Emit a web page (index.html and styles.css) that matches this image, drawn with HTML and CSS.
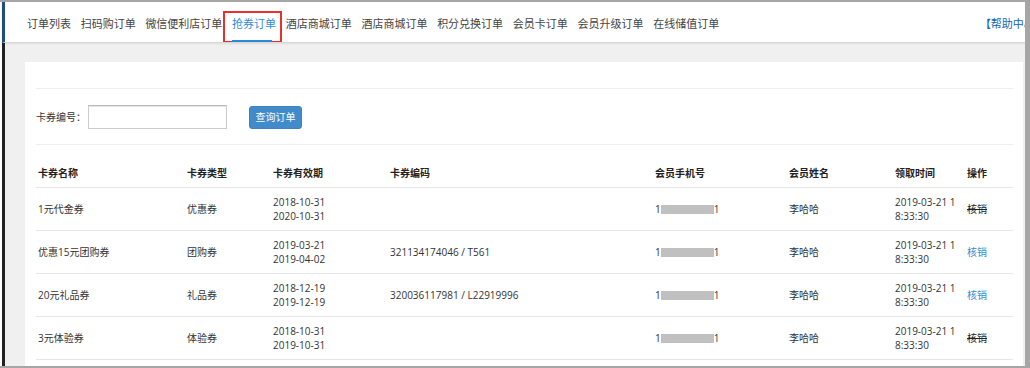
FILE: index.html
```html
<!DOCTYPE html>
<html lang="zh-CN">
<head>
<meta charset="utf-8">
<title>抢券订单</title>
<link rel="stylesheet" href="styles.css">
</head>
<body>
<div class="frame">
  <nav class="nav">
    <a class="nav-item">订单列表</a>
    <a class="nav-item">扫码购订单</a>
    <a class="nav-item">微信便利店订单</a>
    <a class="nav-item active">抢券订单</a>
    <a class="nav-item">酒店商城订单</a>
    <a class="nav-item">酒店商城订单</a>
    <a class="nav-item">积分兑换订单</a>
    <a class="nav-item">会员卡订单</a>
    <a class="nav-item">会员升级订单</a>
    <a class="nav-item">在线储值订单</a>
    <a class="nav-help">【帮助中心】</a>
  </nav>
  <main class="main">
    <section class="card">
      <form class="search">
        <label class="search-label">卡券编号：</label>
        <input class="search-input" type="text">
        <button class="btn" type="button">查询订单</button>
      </form>
      <table class="table">
        <colgroup>
          <col class="c1"><col class="c2"><col class="c3"><col class="c4"><col class="c5"><col class="c6"><col class="c7"><col class="c8">
        </colgroup>
        <thead>
          <tr><th>卡券名称</th><th>卡券类型</th><th>卡券有效期</th><th>卡券编码</th><th>会员手机号</th><th>会员姓名</th><th>领取时间</th><th>操作</th></tr>
        </thead>
        <tbody>
          <tr>
            <td>1元代金券</td><td>优惠券</td><td>2018-10-31<br>2020-10-31</td><td></td>
            <td>1<span class="mask"></span>1</td><td>李哈哈</td><td>2019-03-21 1<br>8:33:30</td><td><span class="op-done">核销</span></td>
          </tr>
          <tr>
            <td>优惠15元团购券</td><td>团购券</td><td>2019-03-21<br>2019-04-02</td><td>321134174046 / T561</td>
            <td>1<span class="mask"></span>1</td><td>李哈哈</td><td>2019-03-21 1<br>8:33:30</td><td><a class="op-link">核销</a></td>
          </tr>
          <tr>
            <td>20元礼品券</td><td>礼品券</td><td>2018-12-19<br>2019-12-19</td><td>320036117981 / L22919996</td>
            <td>1<span class="mask"></span>1</td><td>李哈哈</td><td>2019-03-21 1<br>8:33:30</td><td><a class="op-link">核销</a></td>
          </tr>
          <tr>
            <td>3元体验券</td><td>体验券</td><td>2018-10-31<br>2019-10-31</td><td></td>
            <td>1<span class="mask"></span>1</td><td>李哈哈</td><td>2019-03-21 1<br>8:33:30</td><td><span class="op-done">核销</span></td>
          </tr>
        </tbody>
      </table>
    </section>
  </main>
</div>
</body>
</html>
```

FILE: styles.css
```css
* { box-sizing: border-box; }
html, body { margin: 0; padding: 0; background: #fff; }
body {
  font-family: "Open Sans", "Noto Sans CJK SC", sans-serif;
  color: #333;
}
.frame {
  width: 1030px;
  height: 368px;
  border-top: 2px solid #a6a6a6;
  border-right: 5px solid #a6a6a6;
  border-bottom: 2px solid #a6a6a6;
  padding-left: 2px;
  background: #fff;
  overflow: hidden;
  display: flex;
  flex-direction: column;
}
.nav {
  flex: 0 0 41px;
  display: flex;
  align-items: flex-start;
  gap: 9.7px;
  padding-left: 22px;
  border-left: 3px solid #1f4e7e;
  border-bottom: 1px solid #d6d6d6;
  box-shadow: 0 1px 2px rgba(0,0,0,0.08);
  font-size: 11px;
  line-height: 14px;
  white-space: nowrap;
  overflow: hidden;
  position: relative;
  z-index: 1;
}
.nav-item {
  position: relative;
  display: block;
  height: 40px;
  padding-top: 15px;
  color: #444;
  flex-shrink: 0;
}
.nav-item.active { color: #2f8ae0; }
.nav-item.active::after {
  content: "";
  position: absolute;
  left: 0;
  right: 4px;
  bottom: 0;
  height: 2px;
  background: #2a8ad8;
}
.nav-item.active::before {
  content: "";
  position: absolute;
  left: -9px;
  right: -6px;
  top: 9px;
  bottom: -1px;
  border: 2px solid #e8302c;
}
.nav-help {
  display: block;
  flex-shrink: 0;
  margin-left: 251px;
  padding-top: 15px;
  color: #1a63b5;
}
.main {
  flex: 1;
  background: #f0f0f0;
  border-left: 3px solid #222;
  padding: 19px 2px 0 20px;
  min-height: 0;
}
.card {
  background: #fff;
  height: 100%;
  padding: 26px 10px 0 11px;
}
.search {
  display: flex;
  align-items: center;
  margin: 0;
  padding: 16px 0 15px;
  border-top: 1px solid #eee;
  border-bottom: 1px solid #eee;
}
.search-label {
  font-size: 10px;
  line-height: 14px;
  color: #333;
  margin-right: 2px;
}
.search-input {
  width: 139px;
  height: 24px;
  border: 1px solid #ccc;
  border-top-color: #b8b8b8;
  box-shadow: inset 0 1px 1px rgba(0,0,0,0.1);
  padding: 0 4px;
  margin: 0;
  outline: none;
}
.btn {
  margin-left: 22px;
  width: 53px;
  height: 23px;
  padding: 0;
  border: 1px solid #3d82c4;
  border-radius: 3px;
  background: #428bca;
  color: #fff;
  font-family: inherit;
  font-size: 10px;
  line-height: 14px;
}
.table {
  width: 977px;
  margin-top: 14px;
  table-layout: fixed;
  border-collapse: collapse;
  font-size: 10px;
  line-height: 14px;
}
.c1 { width: 149px; }
.c2 { width: 86px; }
.c3 { width: 117px; }
.c4 { width: 265px; }
.c5 { width: 134px; }
.c6 { width: 106px; }
.c7 { width: 72px; }
.c8 { width: 48px; }
.table th {
  text-align: left;
  font-weight: bold;
  color: #222;
  padding: 7px 2px;
  border-bottom: 1px solid #e6e6e6;
  white-space: nowrap;
}
.table td {
  padding: 7px 2px;
  border-bottom: 1px solid #e6e6e6;
  vertical-align: middle;
  white-space: nowrap;
  color: #333;
}
.mask {
  display: inline-block;
  width: 53px;
  height: 9px;
  background: #c0c0c0;
  vertical-align: -1px;
}
.op-done {
  color: #222;
  text-decoration: line-through;
}
.op-link {
  color: #428bca;
}
```
